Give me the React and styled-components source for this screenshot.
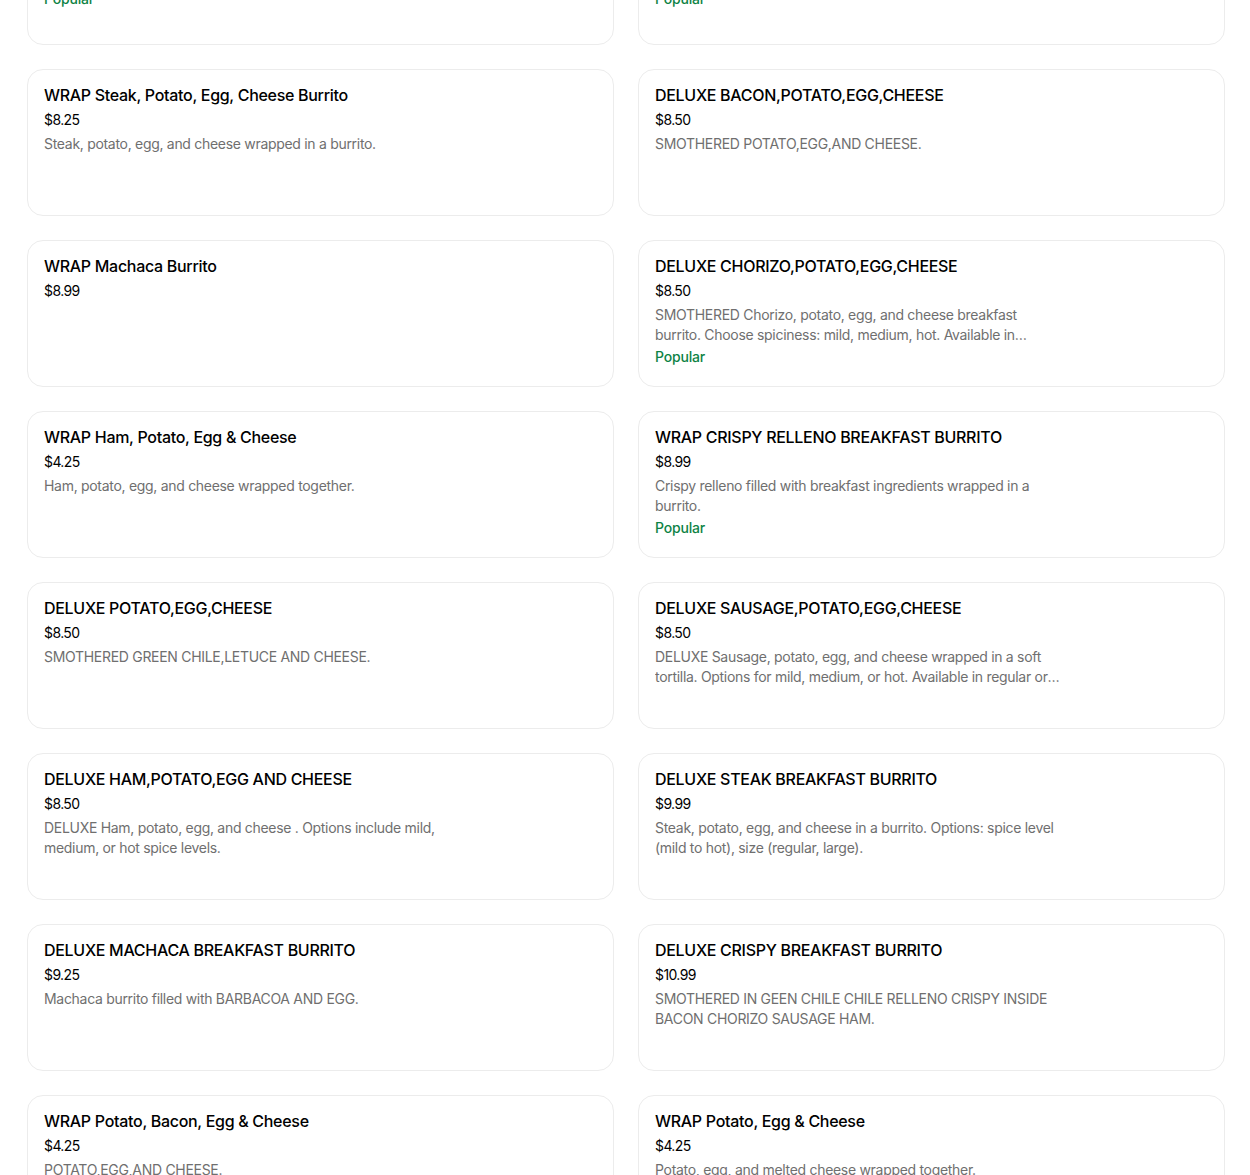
import React from "react";
import styled, { createGlobalStyle } from "styled-components";

const Global = createGlobalStyle`
  html, body { margin: 0; padding: 0; background: #ffffff; }
  body { overflow: hidden; font-family: Inter, "Noto Sans", "Liberation Sans", sans-serif; color: #000; }
`;

const Page = styled.div`
  width: 1250px;
  height: 1175px;
  overflow: hidden;
`;

const Grid = styled.div`
  display: grid;
  grid-template-columns: 587px 587px;
  column-gap: 24px;
  row-gap: 24px;
  padding-left: 27px;
  margin-top: -118px;
`;

const Card = styled.div`
  box-sizing: border-box;
  height: ${(p) => (p.$tall ? 163 : 147)}px;
  border: 1px solid #ececec;
  border-radius: 16px;
  padding: 15px 16px 0 16px;
  display: flex;
  flex-direction: column;
  background: #fff;
`;

const Title = styled.div`
  font-size: 16px;
  line-height: 20px;
  font-weight: 500;
  letter-spacing: -0.3px;
  color: #000;
`;

const Price = styled.div`
  margin-top: 5px;
  font-size: 14px;
  line-height: 20px;
  letter-spacing: -0.6px;
  color: #000;
`;

const Desc = styled.div`
  margin-top: 4px;
  font-size: 14px;
  line-height: 20px;
  letter-spacing: -0.3px;
  color: #6f6f6f;
  max-width: 408px;
  white-space: pre-line;
  display: -webkit-box;
  -webkit-line-clamp: 2;
  -webkit-box-orient: vertical;
  overflow: hidden;
`;

const Badge = styled.div`
  margin-top: 2px;
  font-size: 14px;
  line-height: 20px;
  font-weight: 500;
  letter-spacing: -0.2px;
  color: #0e8345;
`;

const items = [
  { t: "WRAP Chorizo, Potato, Egg & Cheese", p: "$4.25", d: "Chorizo, potato, egg, and cheese wrapped in a flour tortilla with salsa on the side.", pop: true, tall: true },
  { t: "WRAP Bacon, Potato, Egg & Cheese", p: "$4.25", d: "Bacon, potato, egg, and cheese wrapped in a flour tortilla with salsa on the side.", pop: true, tall: true },
  { t: "WRAP Steak, Potato, Egg, Cheese Burrito", p: "$8.25", d: "Steak, potato, egg, and cheese wrapped in a burrito." },
  { t: "DELUXE BACON,POTATO,EGG,CHEESE", p: "$8.50", d: "SMOTHERED POTATO,EGG,AND CHEESE." },
  { t: "WRAP Machaca Burrito", p: "$8.99" },
  { t: "DELUXE CHORIZO,POTATO,EGG,CHEESE", p: "$8.50", d: "SMOTHERED Chorizo, potato, egg, and cheese breakfast burrito. Choose spiciness: mild, medium, hot. Available in\nregular or large sizes.", pop: true },
  { t: "WRAP Ham, Potato, Egg & Cheese", p: "$4.25", d: "Ham, potato, egg, and cheese wrapped together." },
  { t: "WRAP CRISPY RELLENO BREAKFAST BURRITO", p: "$8.99", d: "Crispy relleno filled with breakfast ingredients wrapped in a burrito.", pop: true },
  { t: "DELUXE POTATO,EGG,CHEESE", p: "$8.50", d: "SMOTHERED GREEN CHILE,LETUCE AND CHEESE." },
  { t: "DELUXE SAUSAGE,POTATO,EGG,CHEESE", p: "$8.50", d: "DELUXE Sausage, potato, egg, and cheese wrapped in a soft tortilla. Options for mild, medium, or hot. Available in regular or large." },
  { t: "DELUXE HAM,POTATO,EGG AND CHEESE", p: "$8.50", d: "DELUXE Ham, potato, egg, and cheese . Options include mild, medium, or hot spice levels." },
  { t: "DELUXE STEAK BREAKFAST BURRITO", p: "$9.99", d: "Steak, potato, egg, and cheese in a burrito. Options: spice level (mild to hot), size (regular, large)." },
  { t: "DELUXE MACHACA BREAKFAST BURRITO", p: "$9.25", d: "Machaca burrito filled with BARBACOA AND EGG." },
  { t: "DELUXE CRISPY BREAKFAST BURRITO", p: "$10.99", d: "SMOTHERED IN GEEN CHILE CHILE RELLENO CRISPY INSIDE BACON CHORIZO SAUSAGE HAM." },
  { t: "WRAP Potato, Bacon, Egg & Cheese", p: "$4.25", d: "POTATO,EGG,AND CHEESE." },
  { t: "WRAP Potato, Egg & Cheese", p: "$4.25", d: "Potato, egg, and melted cheese wrapped together." },
];

export default function App() {
  return (
    <Page>
      <Global />
      <Grid>
        {items.map((it, i) => (
          <Card key={i} $tall={it.tall}>
            <Title>{it.t}</Title>
            <Price>{it.p}</Price>
            {it.d && <Desc>{it.d}</Desc>}
            {it.pop && <Badge>Popular</Badge>}
          </Card>
        ))}
      </Grid>
    </Page>
  );
}
